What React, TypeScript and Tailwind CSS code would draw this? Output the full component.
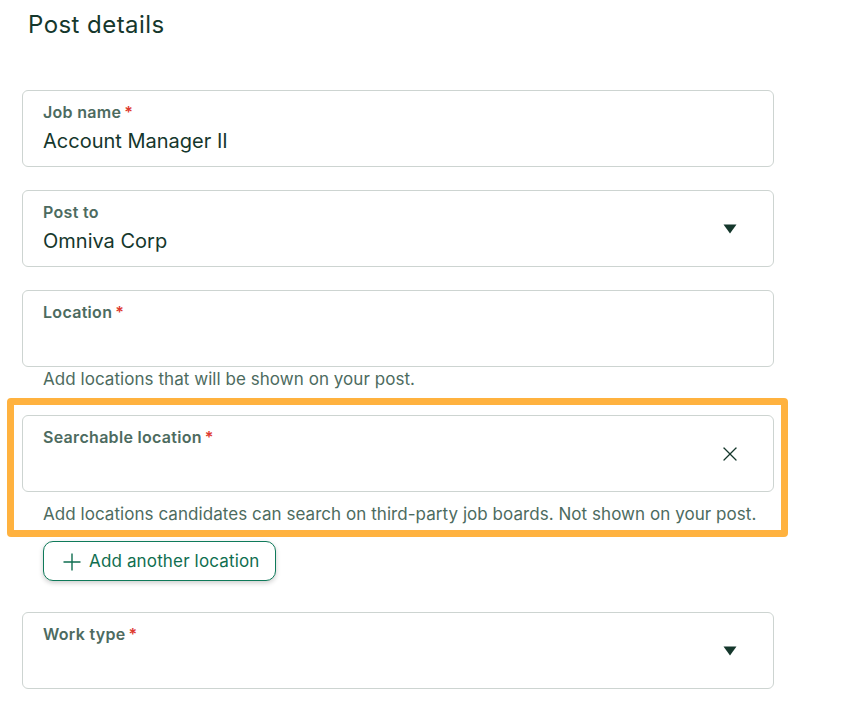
import { X } from 'lucide-react';

type FieldProps = {
    label: string
    value?: string
    required?: boolean
    icon?: React.ReactNode
};

const Caret = () => (
    <svg width="14" height="10" viewBox="0 0 14 10" className="block">
        <path d="M0.5 0.5H13.5L7 9.5Z" fill="#15372c" />
    </svg>
);

const PlusIcon = () => (
    <svg width="18" height="18" viewBox="0 0 18 18" className="block shrink-0">
        <path d="M9 0.5V17.5M0.5 9H17.5" stroke="#0f6e50" strokeWidth="1.4" fill="none" />
    </svg>
);

const Field: React.FC<FieldProps> = ({ label, value, required, icon }) => (
    <div className="w-[752px] h-[77px] rounded-[6px] border border-[#cdd4d1] bg-white pl-5 pr-[36px] flex items-center justify-between">
        <div className="flex-1 h-full pt-[11px]">
            <div className="text-[16px] leading-[20px] font-semibold tracking-[0.3px] text-[#4d6b60]">
                {label}
                {required && <span className="ml-[3px] text-[#de3a2f]">*</span>}
            </div>
            <div className="text-[20px] leading-[28px] mt-[5px] text-[#15372c]">{value}</div>
        </div>
        {icon}
    </div>
);

const Helper = ({ children }: { children: React.ReactNode }) => (
    <p className="pl-[21px] text-[17px] leading-[24px] tracking-[0.05px] text-[#4d6b60]">{children}</p>
);

export default function App() {
    return (
        <div className="w-[860px] h-[701px] overflow-hidden bg-white pl-[22px] font-['Inter',sans-serif]">
            <h1 className="pl-[6px] pt-[8px] text-[24px] leading-[34px] tracking-[0.45px] text-[#15372c]">Post details</h1>

            <div className="mt-[48px] flex flex-col">
                <Field label="Job name" value="Account Manager II" required />
                <div className="mt-[23px]">
                    <Field label="Post to" value="Omniva Corp" icon={<Caret />} />
                </div>
                <div className="mt-[23px]">
                    <Field label="Location" required />
                </div>
                <div className="mt-0">
                    <Helper>Add locations that will be shown on your post.</Helper>
                </div>

                <div className="mt-[7px] -ml-[15px] w-[781px] h-[139px] rounded-[4px] border-[7px] border-[#ffb23f] pl-[8px] pt-[10px]">
                    <Field label="Searchable location" required icon={<X size={24} strokeWidth={1.3} className="text-[#15372c] -mr-[5px]" />} />
                    <div className="mt-[10px]">
                        <Helper>Add locations candidates can search on third-party job boards. Not shown on your post.</Helper>
                    </div>
                </div>

                <button className="mt-[4px] ml-[21px] w-[233px] h-[40px] rounded-[10px] border border-[#0f7a5a] bg-white shadow-[0_2px_5px_rgba(0,0,0,0.2)] flex items-center pl-[19px] pt-[2px] gap-[8px] text-[17px] tracking-[0.15px] text-[#0f6e50]">
                    <PlusIcon />
                    Add another location
                </button>

                <div className="mt-[31px]">
                    <Field label="Work type" required icon={<Caret />} />
                </div>
            </div>
        </div>
    );
}
